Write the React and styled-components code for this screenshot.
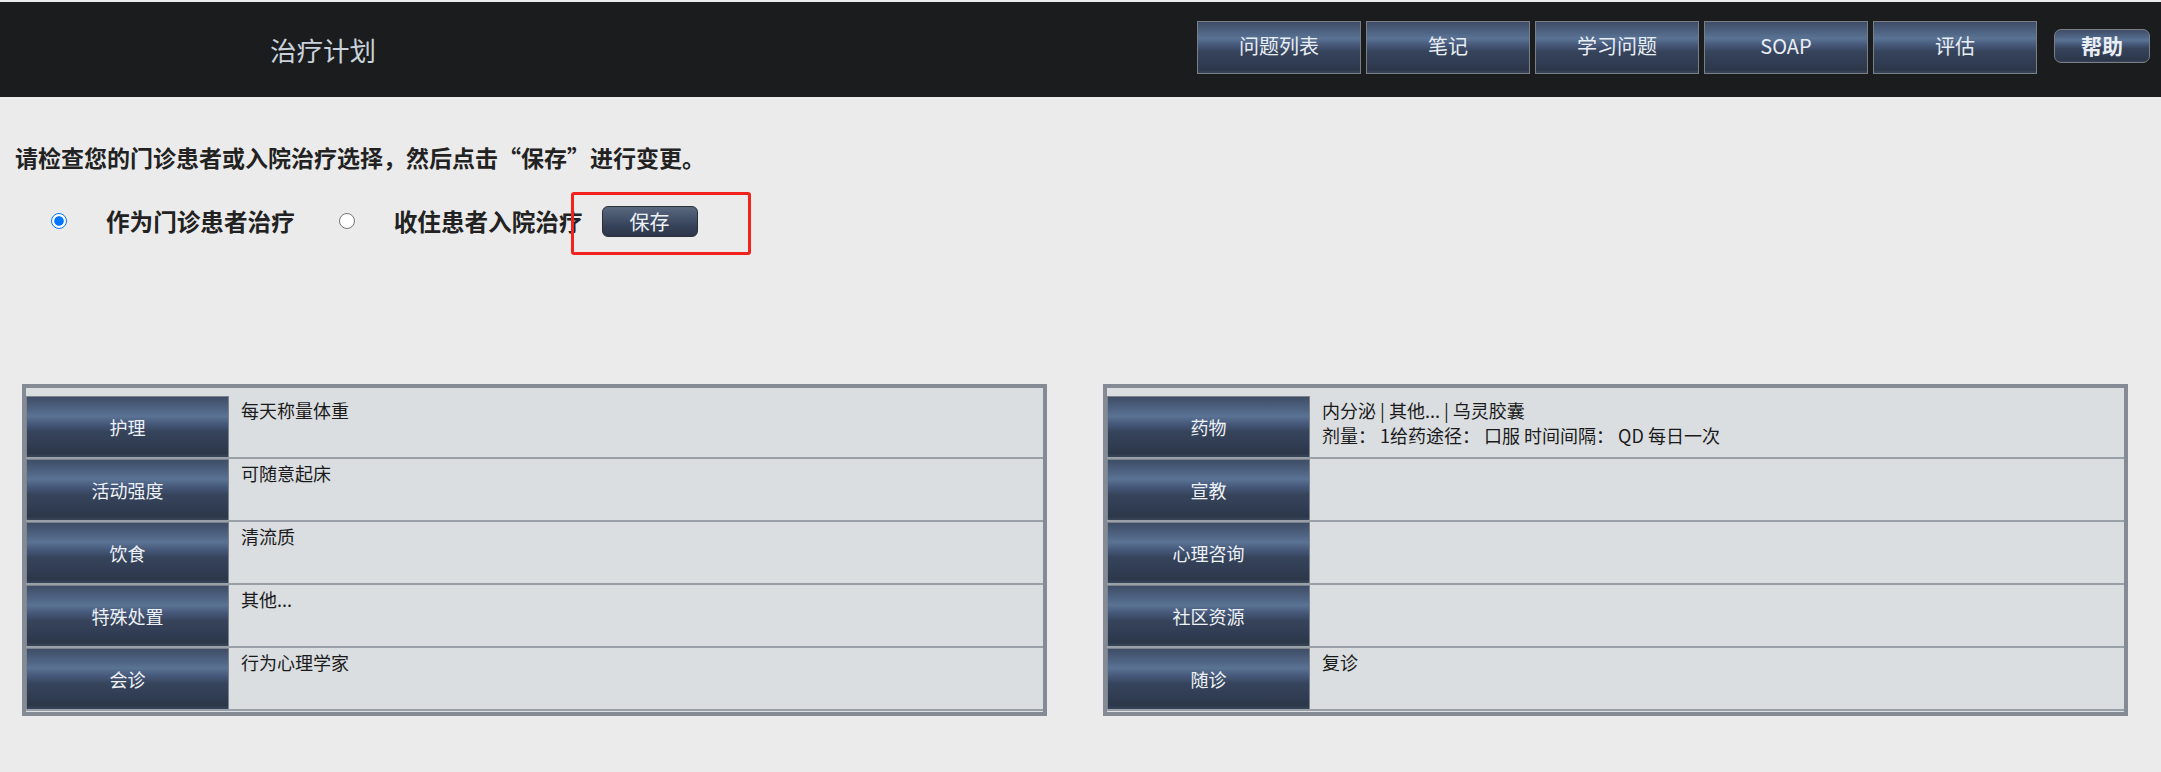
import React, { useState } from 'react'
import styled, { createGlobalStyle } from 'styled-components'

const cjk = `"Noto Sans CJK SC", "Microsoft YaHei", sans-serif`

// glossy steel-blue used by nav buttons and table headers
const gloss = `linear-gradient(to bottom, #3f4d66 0%, #4d6180 18%, #5a7394 32%, #46587a 45%, #36445b 58%, #303c52 80%, #2c3749 94%, #3a465a 100%)`

const GlobalStyle = createGlobalStyle`
  html, body {
    margin: 0;
    background: #ebebeb;
    font-family: ${cjk};
    overflow: hidden;
  }
`

const Header = styled.header`
  margin-top: 2px;
  height: 95px;
  background: #1b1c1e;
  display: flex;
  align-items: flex-start;
`

const Title = styled.h1`
  margin: 0;
  padding: 30px 0 0 270px;
  font-size: 26.5px;
  line-height: 36px;
  font-weight: normal;
  color: #c9d2da;
`

const Nav = styled.nav`
  margin-left: auto;
  margin-right: 11px;
  padding-top: 19px;
  display: flex;
  align-items: flex-start;
  gap: 5px;
`

const NavButton = styled.button`
  width: 164px;
  height: 53px;
  border: 1px solid #7a7f86;
  background: ${gloss};
  color: #e8eef4;
  font-family: ${cjk};
  font-size: 20px;
  padding: 0 0 4px;
  cursor: pointer;
`

const HelpButton = styled(NavButton)`
  width: 96px;
  height: 34px;
  margin-top: 8px;
  margin-left: 12px;
  border-radius: 7px;
  font-size: 21px;
  font-weight: bold;
  padding: 0 0 2px;
`

const Main = styled.main`
  padding: 0 0 0 15px;
`

const Prompt = styled.p`
  margin: 44px 0 0;
  font-size: 23px;
  line-height: 32px;
  font-weight: bold;
  color: #222;
`

const ChoiceRow = styled.div`
  margin-top: 32px;
  padding-left: 36px;
  display: flex;
  align-items: center;
  height: 32px;
`

const Choice = styled.label`
  display: flex;
  align-items: center;
  gap: 39px;
  margin-right: 44px;
  font-size: 23.6px;
  font-weight: bold;
  color: #222;
  cursor: pointer;

  &:last-of-type {
    margin-right: 19px;
  }
`

const Radio = styled.input.attrs({ type: 'radio' })`
  appearance: none;
  width: 16px;
  height: 16px;
  margin: 0;
  box-sizing: border-box;
  border-radius: 50%;
  border: 1px solid #767676;
  background: #fff;

  &:checked {
    border: 1.5px solid #0075ff;
    background: radial-gradient(circle, #0075ff 0 44%, #fff 52%);
  }
`

const SaveWrap = styled.div`
  position: relative;
`

const SaveButton = styled.button`
  width: 96px;
  height: 31px;
  border: 1px solid #2b2f36;
  border-radius: 6px;
  background: linear-gradient(to bottom, #59677f 0%, #46546d 35%, #36425a 65%, #2c3649 100%);
  color: #eef2f6;
  font-family: ${cjk};
  font-size: 20px;
  padding: 0 0 2px;
  cursor: pointer;
`

// red annotation box drawn over the save button
const Highlight = styled.div`
  position: absolute;
  left: -31px;
  top: -14px;
  right: -53px;
  bottom: -18px;
  border: 3px solid #f2231d;
  border-radius: 3px;
  pointer-events: none;
`

const Panels = styled.div`
  margin-top: 147px;
  padding-left: 7px;
  display: flex;
  gap: 56px;
`

const Panel = styled.div`
  width: 1025px;
  box-sizing: border-box;
  border: 4px solid #858b95;
  background: #dadee1;
  padding: 8px 0 1px;
`

const Row = styled.div`
  display: grid;
  grid-template-columns: 203px 1fr;
  height: 63px;
  box-sizing: border-box;
  border-bottom: 2px solid #9aa0a8;
`

const Label = styled.div`
  display: flex;
  align-items: center;
  justify-content: center;
  border: 1px solid #7c828b;
  border-bottom: none;
  background: ${gloss};
  color: #eef2f6;
  font-size: 18px;
`

const Value = styled.div`
  padding: 2px 12px;
  font-size: 18px;
  line-height: 25px;
  color: #1a1a1a;
`

const leftRows = [
  ['护理', ['每天称量体重']],
  ['活动强度', ['可随意起床']],
  ['饮食', ['清流质']],
  ['特殊处置', ['其他...']],
  ['会诊', ['行为心理学家']],
]

const rightRows = [
  ['药物', ['内分泌 | 其他... | 乌灵胶囊', '剂量： 1给药途径： 口服 时间间隔： QD 每日一次']],
  ['宣教', []],
  ['心理咨询', []],
  ['社区资源', []],
  ['随诊', ['复诊']],
]

function PlanTable(props) {
  return (
    <Panel>
      {props.rows.map(([name, lines]) => (
        <Row key={name}>
          <Label>{name}</Label>
          <Value>
            {lines.map((l, i) => <div key={i}>{l}</div>)}
          </Value>
        </Row>
      ))}
    </Panel>
  )
}

export default function App() {
  const [mode, setMode] = useState('outpatient')
  const tabs = ['问题列表', '笔记', '学习问题', 'SOAP', '评估']

  return (
    <>
      <GlobalStyle />
      <Header>
        <Title>治疗计划</Title>
        <Nav>
          {tabs.map(t => <NavButton key={t}>{t}</NavButton>)}
          <HelpButton>帮助</HelpButton>
        </Nav>
      </Header>
      <Main>
        <Prompt>请检查您的门诊患者或入院治疗选择，然后点击“保存”进行变更。</Prompt>
        <ChoiceRow>
          <Choice>
            <Radio name="mode" checked={mode === 'outpatient'} onChange={() => setMode('outpatient')} />
            作为门诊患者治疗
          </Choice>
          <Choice>
            <Radio name="mode" checked={mode === 'inpatient'} onChange={() => setMode('inpatient')} />
            收住患者入院治疗
          </Choice>
          <SaveWrap>
            <SaveButton>保存</SaveButton>
            <Highlight />
          </SaveWrap>
        </ChoiceRow>
        <Panels>
          <PlanTable rows={leftRows} />
          <PlanTable rows={rightRows} />
        </Panels>
      </Main>
    </>
  )
}
